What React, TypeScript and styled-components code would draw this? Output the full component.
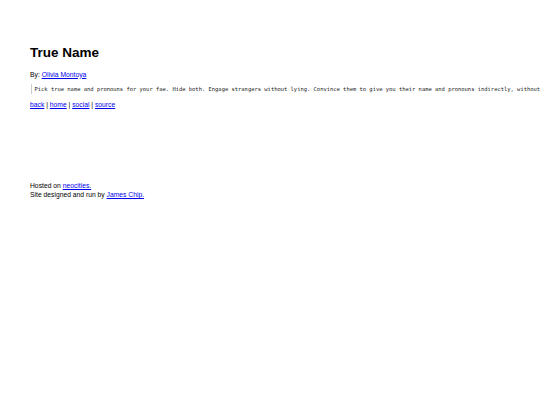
import React from 'react';
import styled, { createGlobalStyle } from 'styled-components';

const GlobalStyle = createGlobalStyle`
  html, body {
    margin: 0;
    padding: 0;
    background: #ffffff;
  }

  body {
    font-family: 'Liberation Sans', Arial, sans-serif;
    color: #000000;
  }
`;

const navLinks = ['back', 'home', 'social', 'source'];

const App = () => {
  return (
    <>
      <GlobalStyle />
      <St.Page>
        <St.Title>True Name</St.Title>
        <St.Byline>
          By: <St.Link href='#'>Olivia Montoya</St.Link>
        </St.Byline>
        <St.Prompt>
          Pick true name and pronouns for your fae. Hide both. Engage strangers without lying. Convince them to give you their name and pronouns indirectly, without
        </St.Prompt>
        <St.Nav>
          {navLinks.map((label, i) => (
            <React.Fragment key={label}>
              {i > 0 && ' | '}
              <St.Link href='#'>{label}</St.Link>
            </React.Fragment>
          ))}
        </St.Nav>
        <St.Footer>
          Hosted on <St.Link href='#'>neocities.</St.Link>
          <br />
          Site designed and run by <St.Link href='#'>James Chip.</St.Link>
        </St.Footer>
      </St.Page>
    </>
  );
};

const St = {
  Page: styled.div`
    display: flex;
    flex-direction: column;
    align-items: flex-start;
    padding: 45px 0 0 30px;
    width: 510px;
    font-size: 6.75px;
    line-height: 1.15;
  `,

  Title: styled.h1`
    margin: 0;
    font-size: 13.5px;
    font-weight: bold;
    line-height: 1.15;
  `,

  Byline: styled.p`
    margin: 10px 0 0 0;
  `,

  Prompt: styled.pre`
    margin: 6px 0 0 1px;
    padding: 1.5px 0 1.5px 2.5px;
    border-left: 1px solid #cccccc;
    font-family: 'DejaVu Sans Mono', 'Liberation Mono', monospace;
    font-size: 5.46px;
    line-height: 1.15;
    color: #222222;
    white-space: pre;
  `,

  Nav: styled.p`
    margin: 7px 0 0 0;
  `,

  Footer: styled.footer`
    margin-top: 74px;
    line-height: 1.3;
  `,

  Link: styled.a`
    color: #0000ee;
    text-decoration: underline;
  `,
};

export default App;
